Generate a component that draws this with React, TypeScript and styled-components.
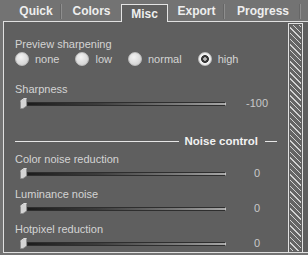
import React from 'react';
import styled, { createGlobalStyle } from 'styled-components';

const GlobalStyle = createGlobalStyle`
  html, body {
    margin: 0;
    padding: 0;
    background: #737373;
  }
  body {
    font-family: "Liberation Sans", Arial, sans-serif;
  }
`;

const Window = styled.div`
  width: 308px;
  height: 255px;
  background: #737373;
  display: flex;
  flex-direction: column;
  overflow: hidden;
`;

const TabBar = styled.div`
  display: flex;
  align-items: flex-end;
  height: 21px;
  padding-left: 10px;
`;

const Tab = styled.div<{ $width: number; $active?: boolean; $sep?: boolean }>`
  position: relative;
  width: ${(p) => p.$width}px;
  height: ${(p) => (p.$active ? 18 : 16)}px;
  box-sizing: border-box;
  display: flex;
  align-items: center;
  justify-content: center;
  padding-top: ${(p) => (p.$active ? 1 : 0)}px;
  font-size: 12px;
  font-weight: bold;
  color: #eeeeee;
  background: ${(p) => (p.$active ? '#5f5f5f' : 'transparent')};
  border: ${(p) => (p.$active ? '1px solid #e4e4e4' : 'none')};
  border-bottom: none;
  margin-bottom: ${(p) => (p.$active ? -1 : 2)}px;
  z-index: ${(p) => (p.$active ? 1 : 0)};
  &::after {
    content: '';
    display: ${(p) => (p.$sep ? 'block' : 'none')};
    position: absolute;
    right: 0;
    top: 1px;
    bottom: 0;
    width: 1px;
    background: #8e8e8e;
    box-shadow: -1px 0 0 #666;
  }
`;

const Panel = styled.div`
  margin-left: 3px;
  height: 232px;
  box-sizing: border-box;
  background: #5f5f5f;
  border: 1px solid #e0e0e0;
  border-right: none;
  display: flex;
`;

const Content = styled.div`
  flex: 1;
  padding: 16px 11px 0 11px;
  color: #d4d4d4;
  font-size: 11px;
  line-height: 13px;
`;

const Label = styled.div<{ $top: number }>`
  margin-top: ${(p) => p.$top}px;
  white-space: nowrap;
`;

const RadioRow = styled.div`
  display: flex;
  align-items: center;
  gap: 16px;
  margin-top: 1px;
  height: 14px;
`;

const RadioItem = styled.div`
  display: flex;
  align-items: center;
  gap: 6px;
`;

const RadioCircle = styled.span<{ $checked?: boolean }>`
  width: 14px;
  height: 14px;
  border-radius: 50%;
  box-sizing: border-box;
  border: 1px solid #bcbcbc;
  background: ${(p) =>
    p.$checked
      ? 'radial-gradient(circle, #b8b8b8 0 1.5px, #353535 2px 3.6px, #f0f0f0 4.2px)'
      : 'radial-gradient(circle at 40% 35%, #f2f2f2, #d6d6d6 70%, #c4c4c4)'};
`;

const SliderRow = styled.div`
  display: flex;
  align-items: center;
  height: 11px;
  margin-top: 2px;
  padding-left: 5px;
`;

const Thumb = styled.svg`
  width: 7px;
  height: 11px;
  flex: none;
`;

const Track = styled.div`
  flex: 1;
  height: 4px;
  box-sizing: border-box;
  border: 1px solid #2e2e2e;
  background: linear-gradient(to right, #1c1c1c, #3c3c3c 35%, #7a7a7a 75%, #a6a6a6);
  border-right-color: #c4c4c4;
`;

const Value = styled.div`
  width: 40px;
  margin-left: 11px;
  text-align: center;
  color: #c8c8c8;
`;

const Divider = styled.div`
  display: flex;
  align-items: center;
  height: 13px;
  margin-top: 26px;
  gap: 6px;
`;

const Line = styled.div<{ $width?: number }>`
  height: 1px;
  background: #e6e6e6;
  flex: ${(p) => (p.$width ? `0 0 ${p.$width}px` : '1')};
`;

const DividerText = styled.span`
  font-weight: bold;
  font-size: 11.5px;
  color: #f2f2f2;
  margin-right: 1px;
`;

const Scrollbar = styled.div`
  width: 15px;
  box-sizing: border-box;
  margin: 1px 5px 0 0;
  border: 1px solid #e2e2e2;
  border-bottom: none;
  box-shadow: inset 0 0 0 1px #5f5f5f;
  background: repeating-linear-gradient(45deg, #646464 0 3px, #d2d2d2 3px 4px);
`;

const Slider = ({ value }: { value: string }) => (
  <SliderRow>
    <Thumb viewBox="0 0 7 11">
      <polygon points="0.5,3 4,0.5 6.5,0.5 6.5,8 3,10.5 0.5,10.5" fill="#d4d4d4" stroke="#8a8a8a" strokeWidth="0.8" />
      <polyline points="0.5,3 4,0.5 6.5,0.5" fill="none" stroke="#f4f4f4" strokeWidth="0.8" />
    </Thumb>
    <Track />
    <Value>{value}</Value>
  </SliderRow>
);

const radios = [
  { label: 'none' },
  { label: 'low' },
  { label: 'normal' },
  { label: 'high', checked: true },
];

const noise = ['Color noise reduction', 'Luminance noise', 'Hotpixel reduction'];

const App = () => (
  <Window>
    <GlobalStyle />
    <TabBar>
      <Tab $width={52} $sep>Quick</Tab>
      <Tab $width={59}>Colors</Tab>
      <Tab $width={47} $active>Misc</Tab>
      <Tab $width={57} $sep>Export</Tab>
      <Tab $width={76} $sep>Progress</Tab>
    </TabBar>
    <Panel>
      <Content>
        <Label $top={0}>Preview sharpening</Label>
        <RadioRow>
          {radios.map((r) => (
            <RadioItem key={r.label}>
              <RadioCircle $checked={r.checked} />
              {r.label}
            </RadioItem>
          ))}
        </RadioRow>
        <Label $top={17}>Sharpness</Label>
        <Slider value="-100" />
        <Divider>
          <Line />
          <DividerText>Noise control</DividerText>
          <Line $width={12} />
        </Divider>
        {noise.map((n, i) => (
          <React.Fragment key={n}>
            <Label $top={i === 0 ? 5 : 9}>{n}</Label>
            <Slider value="0" />
          </React.Fragment>
        ))}
      </Content>
      <Scrollbar />
    </Panel>
  </Window>
);

export default App;
